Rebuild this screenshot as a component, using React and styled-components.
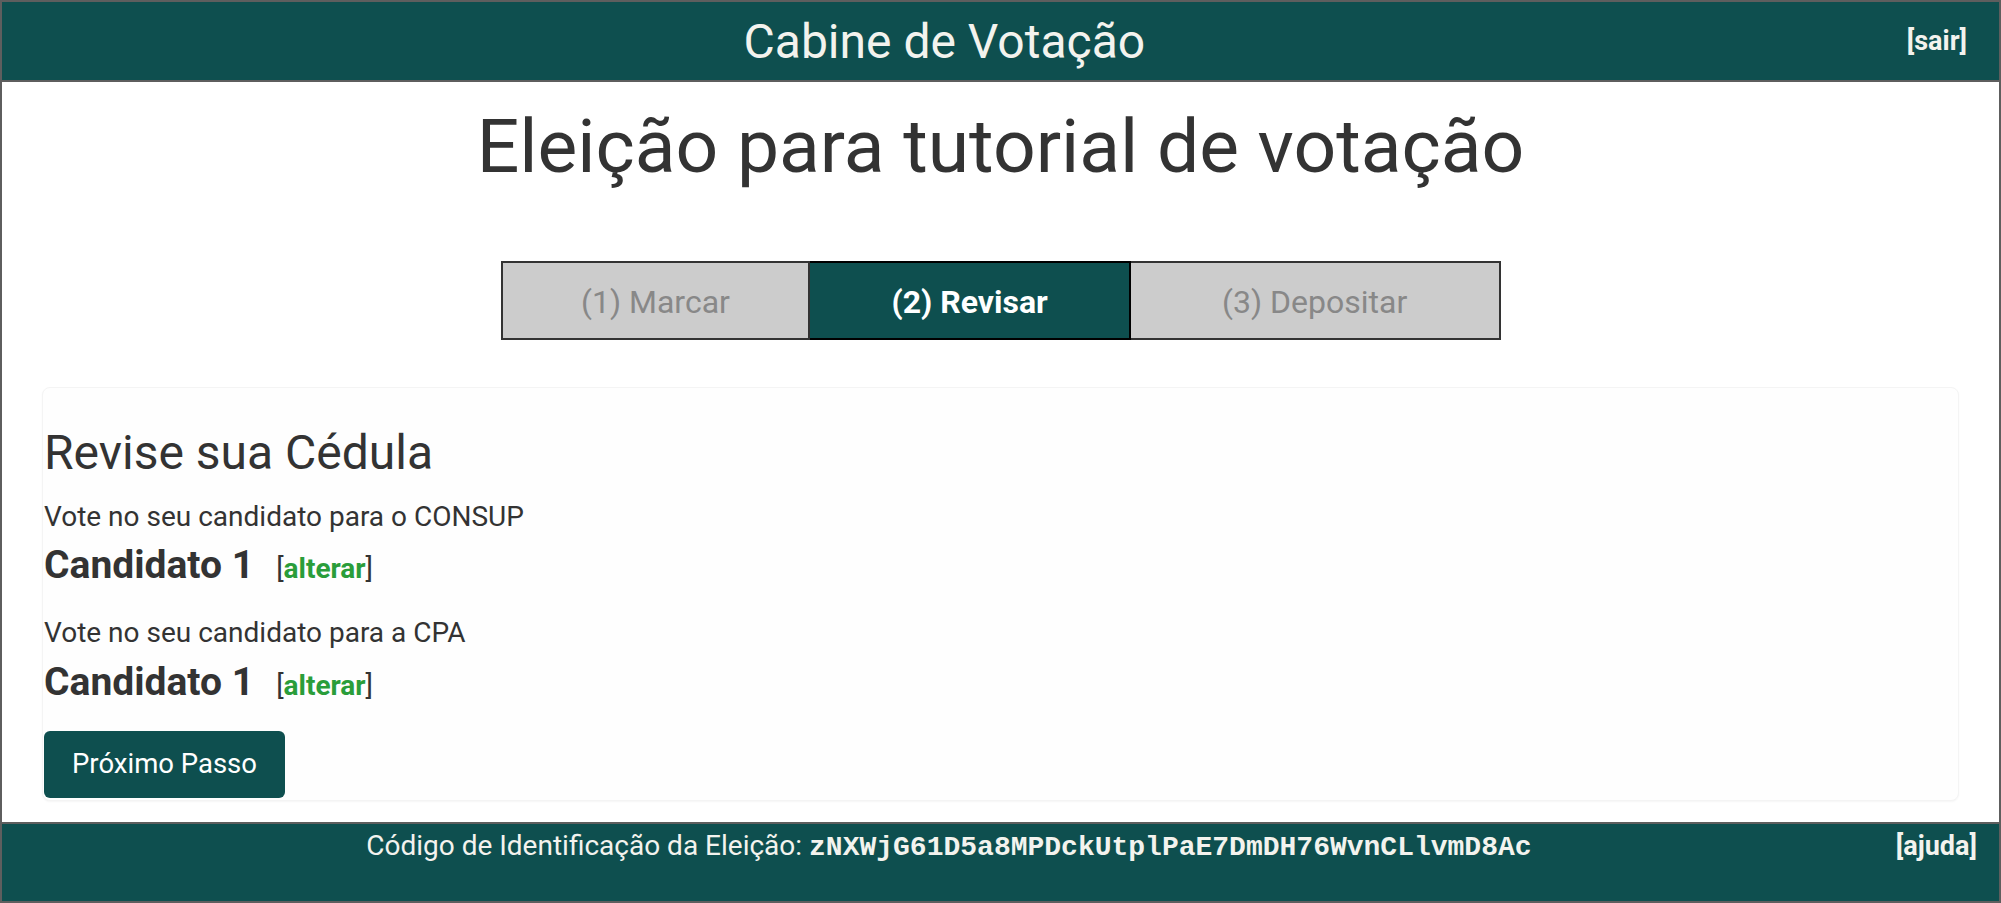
import React from "react";
import styled, { createGlobalStyle } from "styled-components";

const GlobalStyle = createGlobalStyle`
  * { box-sizing: border-box; }
  html, body { margin: 0; padding: 0; background: #ffffff; }
  body {
    font-family: Roboto, "Helvetica Neue", Arial, sans-serif;
    color: #333333;
  }
`;

const TEAL = "#0e4f4f";
const GRAY = "#5e5e5e";

const Page = styled.div`
  height: 100vh;
  display: flex;
  flex-direction: column;
  border: 2px solid ${GRAY};
  overflow: hidden;
`;

const Bar = styled.div`
  display: grid;
  grid-template-columns: 1fr auto;
  background: ${TEAL};
  color: #f3f3ee;
`;

const Header = styled(Bar)`
  height: 80px;
  flex: none;
  align-items: center;
  border-bottom: 2px solid ${GRAY};
`;

const HeaderTitle = styled.div`
  text-align: center;
  font-size: 48px;
  line-height: 1.1;
  font-weight: 400;
  padding-top: 2px;
`;

const BarLink = styled.a`
  font-size: 27px;
  line-height: 38.6px;
  font-weight: 700;
  color: #f3f3ee;
  text-decoration: none;
  padding: ${(p) => p.$pad};
`;

const Main = styled.main`
  flex: 1;
  min-height: 0;
  display: flex;
  flex-direction: column;
  align-items: stretch;
`;

const Title = styled.h1`
  margin: 23px 0 0;
  text-align: center;
  font-size: 75px;
  line-height: 82.5px;
  font-weight: 400;
  color: #333333;
`;

const Steps = styled.div`
  display: table;
  border-collapse: collapse;
  width: 1000px;
  margin: 73px auto 0;
`;

const Step = styled.div`
  display: table-cell;
  padding: 17px 15px 13px;
  text-align: center;
  font-size: 32px;
  line-height: 1.42857;
  border: 2px solid ${(p) => (p.$active ? "#000000" : "#333333")};
  background: ${(p) => (p.$active ? TEAL : "#cccccc")};
  color: ${(p) => (p.$active ? "#ffffff" : "#888888")};
  font-weight: ${(p) => (p.$active ? 700 : 400)};
`;

const Card = styled.section`
  margin: 47px 40px 0;
  padding: 0 1px 2px;
  background: #fefefe;
  border: 1px solid #f4f4f4;
  border-radius: 8px;
  box-shadow: 0 1px 2px rgba(0, 0, 0, 0.04);
`;

const CardBody = styled.div`
  display: flex;
  flex-direction: column;
`;

const CardTitle = styled.h2`
  margin: 39px 0 0;
  font-size: 48px;
  line-height: 52.8px;
  font-weight: 400;
  color: #333333;
`;

const Question = styled.p`
  margin: ${(p) => (p.$first ? "18px" : "28px")} 0 0;
  font-size: 28px;
  line-height: 38.6px;
  color: #333333;
`;

const Choice = styled.h3`
  margin: 7.7px 0 0;
  font-size: 39px;
  line-height: 42.2px;
  font-weight: 700;
  color: #333333;
`;

const Change = styled.span`
  margin-left: 22px;
  font-size: 28px;
  line-height: 1;
  font-weight: 400;
  color: #333333;
`;

const ChangeLink = styled.a`
  color: #2a9d3a;
  font-weight: 700;
  text-decoration: none;
`;

const NextButton = styled.button`
  align-self: flex-start;
  margin-top: 28px;
  padding: 14px 28px;
  font-family: inherit;
  font-size: 27.5px;
  line-height: 38.6px;
  color: #ffffff;
  background: ${TEAL};
  border: 0;
  border-radius: 6px;
  cursor: pointer;
`;

const Footer = styled(Bar)`
  height: 79px;
  flex: none;
  align-items: start;
  padding-top: 3px;
  border-top: 2px solid ${GRAY};
`;

const FooterText = styled.div`
  text-align: center;
  font-size: 28px;
  line-height: 38.6px;
`;

const Code = styled.span`
  font-family: "Liberation Mono", "Courier New", monospace;
  font-weight: 700;
  font-size: 28px;
  line-height: 1;
`;

const races = [
  { question: "Vote no seu candidato para o CONSUP", answer: "Candidato 1" },
  { question: "Vote no seu candidato para a CPA", answer: "Candidato 1" },
];

const steps = [
  { label: "(1) Marcar", active: false },
  { label: "(2) Revisar", active: true },
  { label: "(3) Depositar", active: false },
];

export default function App() {
  return (
    <>
      <GlobalStyle />
      <Page>
        <Header>
          <HeaderTitle>Cabine de Votação</HeaderTitle>
          <BarLink href="#" $pad="0 32px 0 20px">[sair]</BarLink>
        </Header>
        <Main>
          <Title>Eleição para tutorial de votação</Title>
          <Steps>
            {steps.map((s) => (
              <Step key={s.label} $active={s.active}>
                {s.label}
              </Step>
            ))}
          </Steps>
          <Card>
            <CardBody>
              <CardTitle>Revise sua Cédula</CardTitle>
              {races.map((r, i) => (
                <React.Fragment key={r.question}>
                  <Question $first={i === 0}>{r.question}</Question>
                  <Choice>
                    {r.answer}
                    <Change>
                      [<ChangeLink href="#">alterar</ChangeLink>]
                    </Change>
                  </Choice>
                </React.Fragment>
              ))}
              <NextButton>Próximo Passo</NextButton>
            </CardBody>
          </Card>
        </Main>
        <Footer>
          <FooterText>
            Código de Identificação da Eleição:{" "}
            <Code>zNXWjG61D5a8MPDckUtplPaE7DmDH76WvnCLlvmD8Ac</Code>
          </FooterText>
          <BarLink href="#" $pad="0 22px 0 0">[ajuda]</BarLink>
        </Footer>
      </Page>
    </>
  );
}
